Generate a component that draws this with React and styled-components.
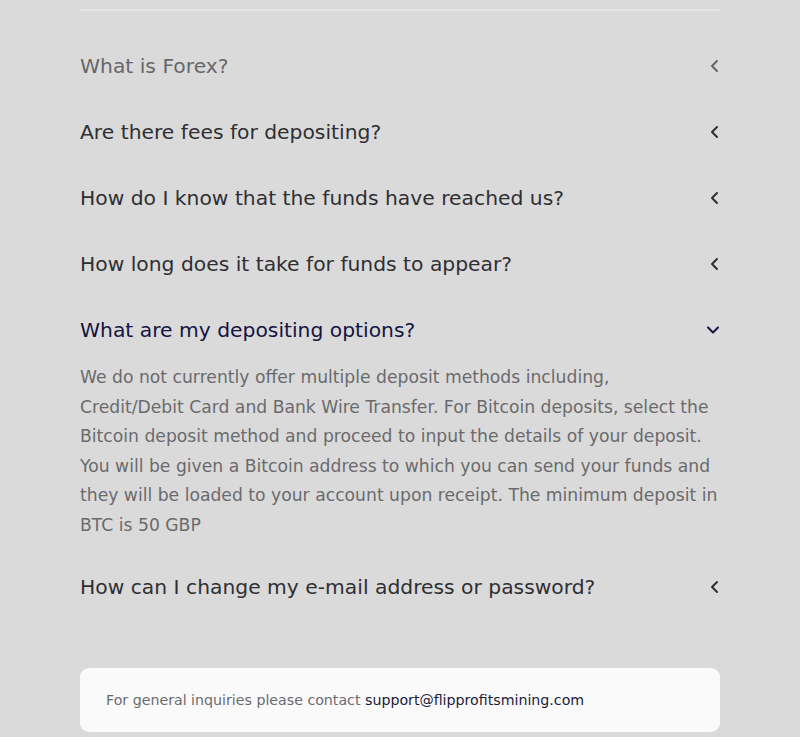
import React, { useState } from "react";
import styled, { createGlobalStyle } from "styled-components";

const GlobalStyle = createGlobalStyle`
  html, body {
    margin: 0;
    padding: 0;
    background: #dadada;
  }
  body {
    font-family: "DejaVu Sans", "Noto Sans", sans-serif;
  }
`;

const faqs = [
  { q: "What is Forex?", a: "" },
  { q: "Are there fees for depositing?", a: "" },
  { q: "How do I know that the funds have reached us?", a: "" },
  { q: "How long does it take for funds to appear?", a: "" },
  {
    q: "What are my depositing options?",
    a: "We do not currently offer multiple deposit methods including,\nCredit/Debit Card and Bank Wire Transfer. For Bitcoin deposits, select the Bitcoin deposit method and proceed to input the details of your deposit. You will be given a Bitcoin address to which you can send your funds and they will be loaded to your account upon receipt. The minimum deposit in BTC is 50 GBP",
  },
  { q: "How can I change my e-mail address or password?", a: "" },
];

const Chevron = ({ open }) => (
  <svg width="14" height="14" viewBox="0 0 14 14" fill="none">
    {open ? (
      <path d="M2 4.5l5 5 5-5" stroke="currentColor" strokeWidth="2" strokeLinecap="round" strokeLinejoin="round" />
    ) : (
      <path d="M11 2L6 7l5 5" stroke="currentColor" strokeWidth="2" strokeLinecap="round" strokeLinejoin="round" />
    )}
  </svg>
);

export default function App() {
  const [openIndex, setOpenIndex] = useState(4);

  return (
    <>
      <GlobalStyle />
      <Page>
        <List>
          {faqs.map((item, i) => {
            const open = i === openIndex;
            return (
              <Item key={item.q}>
                <Header
                  $tone={open ? "active" : i === 0 ? "muted" : "base"}
                  onClick={() => setOpenIndex(open ? -1 : i)}
                >
                  <span>{item.q}</span>
                  <Chevron open={open} />
                </Header>
                {open && <Answer>{item.a}</Answer>}
              </Item>
            );
          })}
        </List>
        <ContactCard>
          For general inquiries please contact{" "}
          <Email href="mailto:support@flipprofitsmining.com">support@flipprofitsmining.com</Email>
        </ContactCard>
      </Page>
    </>
  );
}

const toneColors = {
  muted: "#67676a",
  base: "#2f2f33",
  active: "#14143f",
};

const Page = styled.div`
  width: 640px;
  margin: 0 auto;
  padding-top: 9px;
`;

const List = styled.div`
  border-top: 2px solid #e4e4e4;
  padding-top: 22px;
`;

const Item = styled.div``;

const Header = styled.button`
  display: flex;
  width: 100%;
  align-items: center;
  justify-content: space-between;
  padding: 20px 0;
  background: none;
  border: none;
  cursor: pointer;
  text-align: left;
  font-family: inherit;
  font-size: 20.3px;
  line-height: 26px;
  font-weight: 400;
  color: ${({ $tone }) => toneColors[$tone]};

  svg {
    flex-shrink: 0;
  }
`;

const Answer = styled.p`
  margin: 0;
  padding: 0 0 13px;
  font-size: 17.2px;
  line-height: 29.6px;
  color: #6a6a6d;
  white-space: pre-line;
`;

const ContactCard = styled.div`
  margin-top: 48px;
  background: #fafafa;
  border-radius: 9px;
  padding: 22px 26px;
  font-size: 14.2px;
  line-height: 20px;
  color: #6b6b6e;
`;

const Email = styled.a`
  color: #1c1c3a;
  text-decoration: none;
`;
